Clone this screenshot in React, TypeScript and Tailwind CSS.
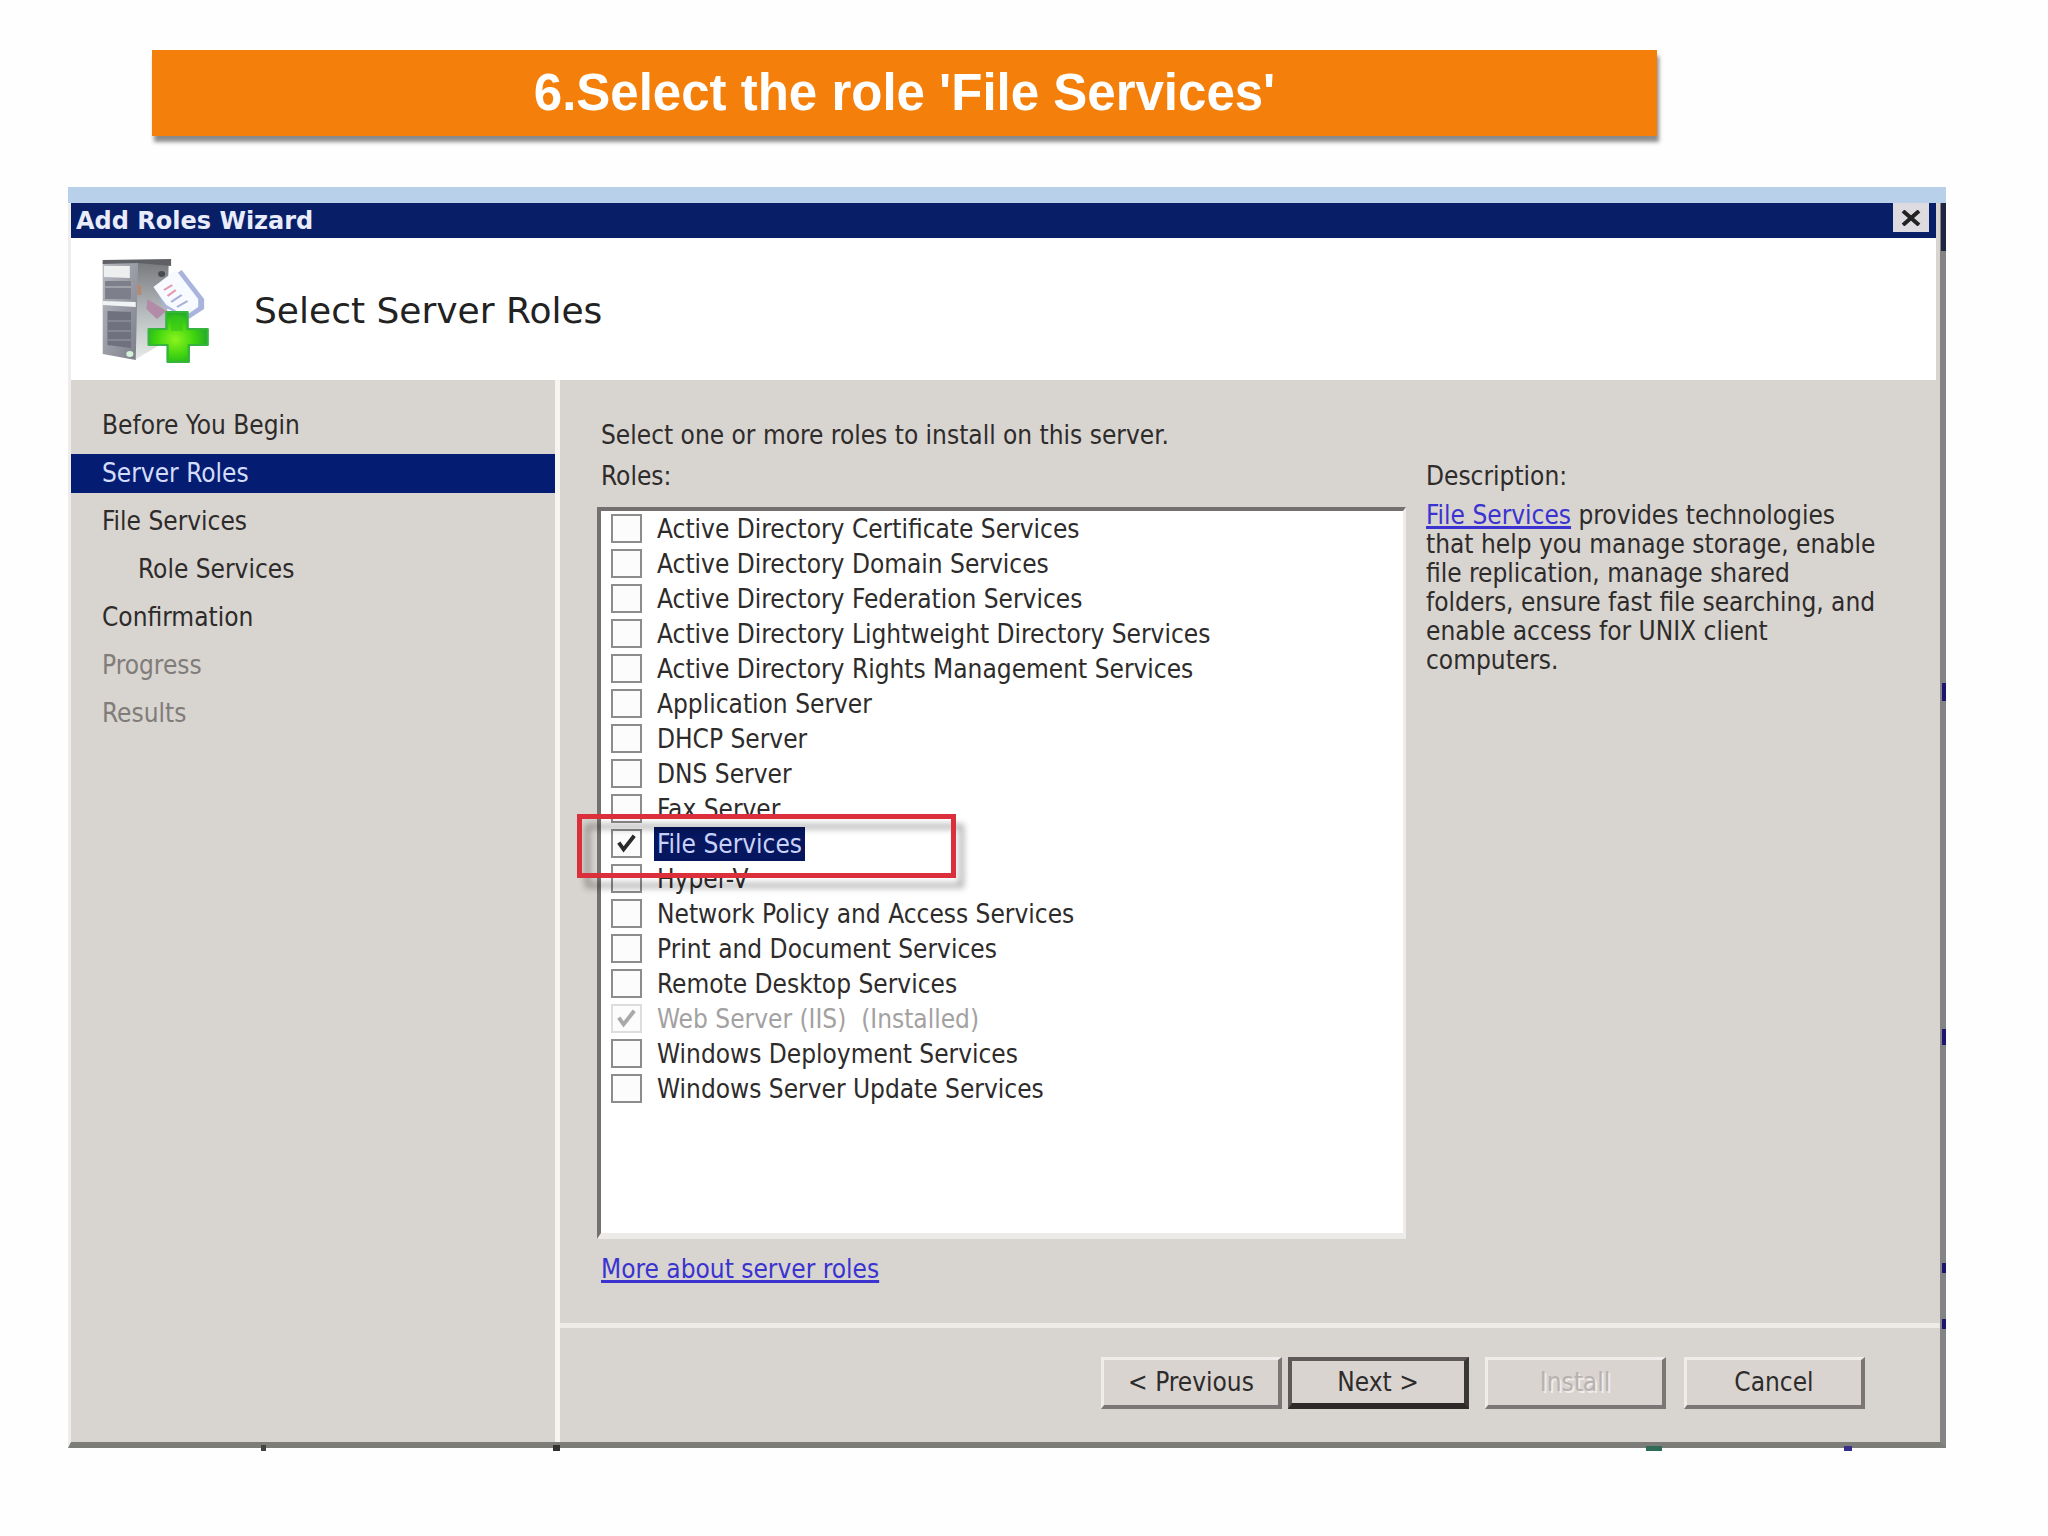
import React from "react";

type Role = {
  name: string;
  checked?: boolean;
  disabled?: boolean;
  selected?: boolean;
};

const roles: Role[] = [
  { name: "Active Directory Certificate Services" },
  { name: "Active Directory Domain Services" },
  { name: "Active Directory Federation Services" },
  { name: "Active Directory Lightweight Directory Services" },
  { name: "Active Directory Rights Management Services" },
  { name: "Application Server" },
  { name: "DHCP Server" },
  { name: "DNS Server" },
  { name: "Fax Server" },
  { name: "File Services", checked: true, selected: true },
  { name: "Hyper-V" },
  { name: "Network Policy and Access Services" },
  { name: "Print and Document Services" },
  { name: "Remote Desktop Services" },
  { name: "Web Server (IIS)  (Installed)", checked: true, disabled: true },
  { name: "Windows Deployment Services" },
  { name: "Windows Server Update Services" },
];

const steps = [
  { name: "Before You Begin", style: "pl-[31px] text-[#2e2b2b]" },
  { name: "Server Roles", style: "pl-[31px] bg-[#041c72] text-[#d3dcfa]" },
  { name: "File Services", style: "pl-[31px] text-[#2e2b2b]" },
  { name: "Role Services", style: "pl-[67px] text-[#2e2b2b]" },
  { name: "Confirmation", style: "pl-[31px] text-[#2e2b2b]" },
  { name: "Progress", style: "pl-[31px] text-[#807c7a]" },
  { name: "Results", style: "pl-[31px] text-[#807c7a]" },
];

const ServerIcon: React.FC = () => (
  <svg
    width="112"
    height="108"
    viewBox="0 0 95 108"
    preserveAspectRatio="none"
    aria-hidden="true"
  >
    <defs>
      <linearGradient id="front" x1="0" y1="0" x2="1" y2="1">
        <stop offset="0" stopColor="#b9bbc2" />
        <stop offset="1" stopColor="#7b7e89" />
      </linearGradient>
      <linearGradient id="side" x1="0" y1="0" x2="0" y2="1">
        <stop offset="0" stopColor="#77787c" />
        <stop offset="0.5" stopColor="#b4b9bb" />
        <stop offset="1" stopColor="#e6eae8" />
      </linearGradient>
      <radialGradient id="plus" cx="0.45" cy="0.55" r="0.6">
        <stop offset="0" stopColor="#8cf41c" />
        <stop offset="0.55" stopColor="#3fd40f" />
        <stop offset="1" stopColor="#1fa22c" />
      </radialGradient>
    </defs>
    {/* tower */}
    <path d="M30 4L60 5L58 84L31 103Z" fill="url(#side)" />
    <path d="M4 4L34 3L32 103L4 97Z" fill="url(#front)" />
    <path d="M4 3L62 2L62 9L34 6L4 7Z" fill="#606166" />
    <path d="M5 9H27V21L5 20Z" fill="#eceef0" />
    <path d="M6 24H28V42H6Z" fill="#7d808a" />
    <path d="M6 30H28" stroke="#a0a2aa" strokeWidth="2" />
    <path d="M4 44L32 45V50L4 48Z" fill="#f1f2f4" />
    <path d="M8 54L28 55V91L8 88Z" fill="#6f727e" />
    <path d="M8 64H28M8 74H28M8 83H28" stroke="#858894" strokeWidth="2" />
    <circle cx="27" cy="97" r="3" fill="#d4f2da" />
    <path d="M35 28V38" stroke="#b98670" strokeWidth="3" />
    <path d="M42 42L58 54L50 62L41 52Z" fill="#b28ba8" />
    {/* document */}
    <path d="M49 31L71 13L90 42L90 52L77 62L56 50Z" fill="#a9b4dd" />
    <path d="M47 30L66 13L85 42L85 50L74 59L58 48Z" fill="#f7faff" />
    <path d="M56 33L63 28M59 39L66 33" stroke="#e59aac" strokeWidth="2" />
    <path d="M62 45L71 38M67 50L76 44" stroke="#a8b0d8" strokeWidth="2" />
    <circle cx="54" cy="17" r="3" fill="#494b50" />
    {/* green plus */}
    <path
      d="M58 55H76V72H93V88H77V105H59V88H43V72H58Z"
      fill="url(#plus)"
      stroke="#35b53b"
      strokeWidth="2"
      strokeLinejoin="round"
    />
    <path d="M62 59H72V74H62Z" fill="#35c41b" opacity="0.6" />
  </svg>
);

const RoleRow: React.FC<{ role: Role }> = ({ role }) => (
  <li className="relative flex h-[35px] items-center">
    <label className="flex items-center gap-3">
      <span className="relative flex">
        <input
          type="checkbox"
          defaultChecked={role.checked}
          disabled={role.disabled}
          className="h-[29px] w-[31px] appearance-none border-2 border-[#8d8b8b] bg-[#fdfcfc] disabled:border-[#dedcdc]"
        />
        {role.checked && (
          <svg
            viewBox="0 0 32 30"
            className="pointer-events-none absolute inset-0"
            aria-hidden="true"
          >
            <path
              d="M8 14L13 21L24 7"
              fill="none"
              stroke={role.disabled ? "#aaa8a8" : "#2b2929"}
              strokeWidth="4"
            />
          </svg>
        )}
      </span>
      <span
        className={
          role.selected
            ? "h-[34px] bg-[#06165f] px-[3px] leading-[34px] whitespace-pre text-[#c9d2f8]"
            : role.disabled
              ? "px-[3px] leading-[34px] whitespace-pre text-[#a3a1a1]"
              : "px-[3px] leading-[34px] whitespace-pre text-[#2e2b2b]"
        }
      >
        {role.name}
      </span>
    </label>
    {/* red frame that marks the role to pick */}
    {role.selected && (
      <div className="pointer-events-none absolute -top-[12px] -left-[34px] z-10 h-[64px] w-[379px] border-5 border-[#dc2f3c] drop-shadow-[8px_10px_3px_rgba(0,0,0,0.3)]" />
    )}
  </li>
);

const raised =
  "h-[52px] w-[181px] border-t-3 border-l-3 border-r-4 border-b-4 border-t-[#f0ecea] border-l-[#f0ecea] border-r-[#7b7675] border-b-[#7b7675] bg-[#d9d4d0]";

const App: React.FC = () => {
  return (
    <div className="min-h-screen bg-[#fefefe] pt-[50px] pb-20">
      <h1 className="mr-[391px] ml-[152px] bg-[#f4800b] text-center font-['Liberation_Sans',sans-serif] text-[51px] leading-[86px] font-bold text-white shadow-[2px_6px_4px_rgba(0,0,0,0.45)]">
        6.Select the role 'File Services'
      </h1>

      <div className="mt-[51px] mr-[102px] ml-[68px] font-['DejaVu_Sans_Condensed','DejaVu_Sans',sans-serif] text-[26px] text-[#2e2b2b]">
        <div className="h-4 bg-[#b9d0ea]" />

        <div className="relative border-r-6 border-b-6 border-l-3 border-r-[#858484] border-b-[#7c7c79] border-l-[#eeede9] bg-[#d8d4cf]">
          {/* Title bar */}
          <div className="mr-1 flex h-[35px] items-center justify-between bg-[#081f68] pr-[7px] pl-[5px]">
            <h2 className="font-['DejaVu_Sans',sans-serif] text-[24px] leading-[32px] font-bold text-[#e8ecfb]">
              Add Roles Wizard
            </h2>
            <button
              type="button"
              aria-label="Close"
              className="flex h-[29px] w-[36px] items-center justify-center self-start bg-[#dddbe0]"
            >
              <svg width="20" height="16" viewBox="0 0 20 16" aria-hidden="true">
                <path d="M2 1L18 15M18 1L2 15" stroke="#222" strokeWidth="4" />
              </svg>
            </button>
          </div>

          {/* Header */}
          <div className="mr-1 flex h-[142px] items-center gap-[44px] bg-white pt-1 pl-[27px]">
            <ServerIcon />
            <h3 className="font-['DejaVu_Sans',sans-serif] text-[36px] font-medium text-[#222]">
              Select Server Roles
            </h3>
          </div>

          <div className="flex">
            {/* Steps */}
            <nav className="w-[489px] shrink-0 border-r-5 border-[#f7f5f2] pt-[26px]">
              <ul className="flex flex-col gap-[9px]">
                {steps.map((step) => (
                  <li key={step.name}>
                    <a href="#" className={`block leading-[39px] ${step.style}`}>
                      {step.name}
                    </a>
                  </li>
                ))}
              </ul>
            </nav>

            <main className="flex-1">
              <div className="flex justify-between gap-5 pr-[58px] pl-[37px]">
                <section className="flex-1">
                  <p className="pt-[35px] pl-1 leading-[40px]">
                    Select one or more roles to install on this server.
                  </p>
                  <p className="pl-1 leading-[42px]">Roles:</p>
                  <ul className="mt-[10px] h-[732px] border-t-4 border-r-3 border-b-6 border-l-4 border-t-[#747070] border-r-[#efedeb] border-b-[#ecebe8] border-l-[#747070] bg-white pl-[10px]">
                    {roles.map((role) => (
                      <RoleRow key={role.name} role={role} />
                    ))}
                  </ul>
                  <a
                    href="#"
                    className="mt-[10px] mb-[34px] ml-1 inline-block leading-[40px] text-[#3a33d0] underline decoration-3"
                  >
                    More about server roles
                  </a>
                </section>

                <aside className="w-[456px] pt-[75px]">
                  <p className="leading-[42px]">Description:</p>
                  <p className="mt-1 leading-[29px]">
                    <a href="#" className="text-[#3a33d0] underline decoration-3">
                      File Services
                    </a>{" "}
                    provides technologies
                    <br />
                    that help you manage storage, enable
                    <br />
                    file replication, manage shared
                    <br />
                    folders, ensure fast file searching, and
                    <br />
                    enable access for UNIX client
                    <br />
                    computers.
                  </p>
                </aside>
              </div>

              {/* Footer buttons */}
              <div className="flex h-[119px] justify-end border-t-5 border-[#eeebe7] pt-[29px] pr-[75px]">
                <button type="button" className={raised}>
                  &lt; Previous
                </button>
                <button
                  type="button"
                  className="mr-[16px] ml-[6px] h-[52px] w-[181px] border-t-4 border-r-5 border-b-6 border-l-4 border-t-[#5e5958] border-r-[#3b3736] border-b-[#2d2928] border-l-[#5e5958] bg-[#dad4d1]"
                >
                  Next &gt;
                </button>
                <button
                  type="button"
                  disabled
                  className={`${raised} text-[#b8b2b0] text-shadow-[2px_2px_0_#efecea]`}
                >
                  Install
                </button>
                <button type="button" className={`${raised} ml-[18px]`}>
                  Cancel
                </button>
              </div>
            </main>
          </div>

          {/* bits of the desktop that show past the window's edge */}
          <div className="absolute top-0 -right-[6px] h-[48px] w-[5px] bg-[#20263f]" />
          <div className="absolute top-[480px] -right-[6px] h-[18px] w-[4px] bg-[#1c1670]" />
          <div className="absolute top-[826px] -right-[6px] h-[16px] w-[4px] bg-[#1c1670]" />
          <div className="absolute top-[1060px] -right-[6px] h-[10px] w-[4px] bg-[#1c1670]" />
          <div className="absolute top-[1116px] -right-[6px] h-[10px] w-[4px] bg-[#1c1670]" />
          <div className="absolute -bottom-[9px] left-[190px] h-[6px] w-[5px] bg-[#44423f]" />
          <div className="absolute -bottom-[9px] left-[482px] h-[6px] w-[7px] bg-[#33312f]" />
          <div className="absolute right-[278px] -bottom-[9px] h-[5px] w-[16px] bg-[#2f6b58]" />
          <div className="absolute right-[88px] -bottom-[9px] h-[5px] w-[8px] bg-[#352f8a]" />
        </div>
      </div>
    </div>
  );
};

export default App;
